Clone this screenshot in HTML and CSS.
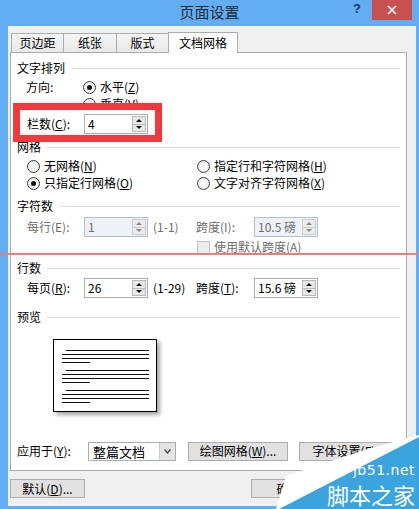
FILE: index.html
```html
<!DOCTYPE html>
<html lang="zh-CN">

<head>
    <meta charset="UTF-8">
    <title>页面设置</title>
    <link rel="stylesheet" href="styles.css">
</head>

<body>
    <div class="window">
        <div class="titlebar">
            <span class="title">页面设置</span>
            <div class="controls">
                <span class="help">?</span>
                <span class="close">
                    <svg width="10" height="10" viewBox="0 0 10 10">
                        <path d="M1 1 L9 9 M9 1 L1 9" stroke="#fff" stroke-width="1.6" fill="none" />
                    </svg>
                </span>
            </div>
        </div>

        <div class="client">
            <!-- tabs -->
            <div class="tabs">
                <div class="tab t1">页边距</div>
                <div class="tab t2">纸张</div>
                <div class="tab t3">版式</div>
                <div class="tab t4 active">文档网格</div>
            </div>

            <div class="panel">
                <div class="group-head g-text"><span>文字排列</span></div>
                <div class="row r-dir">
                    <span class="lbl">方向:</span>
                    <span class="radio on"></span><span class="opt">水平(<u>Z</u>)</span>
                </div>
                <div class="row r-vert">
                    <span class="radio"></span><span class="opt">垂直(<u>V</u>)</span>
                </div>
                <div class="row r-cols">
                    <span class="lbl">栏数(<u>C</u>):</span>
                    <div class="spin"><span class="val">4</span><span class="arrows"><i class="up"></i><i class="down"></i></span></div>
                </div>

                <div class="group-head g-grid"><span>网格</span></div>
                <div class="row r-grid1">
                    <div class="col"><span class="radio"></span><span class="opt">无网格(<u>N</u>)</span></div>
                    <div class="col"><span class="radio"></span><span class="opt">指定行和字符网格(<u>H</u>)</span></div>
                </div>
                <div class="row r-grid2">
                    <div class="col"><span class="radio on"></span><span class="opt">只指定行网格(<u>O</u>)</span></div>
                    <div class="col"><span class="radio"></span><span class="opt">文字对齐字符网格(<u>X</u>)</span></div>
                </div>

                <div class="group-head g-chars"><span>字符数</span></div>
                <div class="row r-chars disabled">
                    <span class="lbl">每行(E):</span>
                    <div class="spin off"><span class="val">1</span><span class="arrows"><i class="up"></i><i class="down"></i></span></div>
                    <span class="range">(1-1)</span>
                    <span class="lbl2">跨度(I):</span>
                    <div class="spin off"><span class="val">10.5 磅</span><span class="arrows"><i class="up"></i><i class="down"></i></span></div>
                </div>
                <div class="row r-check disabled">
                    <span class="check"></span><span class="opt">使用默认跨度(A)</span>
                </div>

                <div class="group-head g-lines"><span>行数</span></div>
                <div class="row r-lines">
                    <span class="lbl">每页(<u>R</u>):</span>
                    <div class="spin"><span class="val">26</span><span class="arrows"><i class="up"></i><i class="down"></i></span></div>
                    <span class="range">(1-29)</span>
                    <span class="lbl2">跨度(<u>T</u>):</span>
                    <div class="spin"><span class="val">15.6 磅</span><span class="arrows"><i class="up"></i><i class="down"></i></span></div>
                </div>

                <div class="group-head g-preview"><span>预览</span></div>
                <div class="preview">
                    <div class="pl indent"></div>
                    <div class="pl"></div>
                    <div class="pl"></div>
                    <div class="pl short"></div>
                    <div class="pl indent"></div>
                    <div class="pl"></div>
                    <div class="pl"></div>
                    <div class="pl short"></div>
                    <div class="pl indent"></div>
                    <div class="pl"></div>
                    <div class="pl"></div>
                    <div class="pl short"></div>
                </div>

                <div class="row r-apply">
                    <span class="lbl-apply">应用于(<u>Y</u>):</span>
                    <div class="select">
                        <span class="val">整篇文档</span>
                        <span class="drop">
                            <svg width="7" height="5" viewBox="0 0 7 5">
                                <path d="M0.5 0.5 L3.5 4 L6.5 0.5" stroke="#444" stroke-width="1.2" fill="none" />
                            </svg>
                        </span>
                    </div>
                    <button class="btn b-draw">绘图网格(<u>W</u>)...</button>
                    <button class="btn b-font">字体设置(<u>F</u>)...</button>
                </div>
            </div>

            <div class="footer">
                <button class="btn b-default">默认(<u>D</u>)...</button>
                <button class="btn b-ok">确定</button>
            </div>
        </div>

        <!-- annotations drawn over the dialog -->
        <div class="mark-box"></div>
        <div class="mark-line"></div>

        <div class="watermark">
            <svg width="150" height="80" viewBox="0 0 150 80">
                <polygon points="7,80 17,47 99,20 150,6 150,80" fill="#fff" />
                <polygon points="10,80 150,8 150,80" fill="#3ba3de" />
            </svg>
            <span class="wm-url">jb51.net</span>
            <span class="wm-name">脚本之家</span>
        </div>
    </div>
</body>

</html>
```

FILE: styles.css
```css
body {
    margin: 0;
    font-family: "Noto Sans CJK SC", sans-serif;
    font-size: 12px;
    color: #000;
}

.window {
    position: relative;
    width: 419px;
    height: 509px;
    background-color: #62adf3;
    overflow: hidden;
}

/* title bar */
.titlebar {
    height: 26px;
    display: grid;
    grid-template-columns: 1fr auto 1fr;
}

.title {
    grid-column: 2;
    font-size: 15px;
    line-height: 24px;
    color: #1d2a38;
}

.controls {
    grid-column: 3;
    justify-self: end;
    display: flex;
    margin-right: 7px;
}

.help {
    width: 30px;
    text-align: center;
    font-family: "Liberation Sans", sans-serif;
    font-weight: bold;
    font-size: 13px;
    line-height: 17px;
    color: #1f3a5c;
}

.close {
    width: 40px;
    height: 20px;
    background-color: #c75050;
    display: flex;
    align-items: center;
    justify-content: center;
}

/* dialog body */
.client {
    margin: 0 3px 0 8px;
    height: 480px;
    box-sizing: border-box;
    padding-top: 6px;
    background-color: #f0f0f0;
}

.tabs {
    display: flex;
    align-items: flex-end;
    padding-left: 3px;
}

.tab {
    height: 19px;
    box-sizing: border-box;
    border: 1px solid #acacac;
    border-bottom: none;
    background: linear-gradient(#f4f4f4, #e9e9e9);
    text-align: center;
    line-height: 18px;
    margin-left: -1px;
}

.tab.t1 {
    width: 53px;
    margin-left: 0;
}

.tab.t2 {
    width: 54px;
}

.tab.t3 {
    width: 53px;
}

.tab.t4 {
    width: 70px;
}

.tab.active {
    height: 21px;
    line-height: 20px;
    background: #fff;
    margin-bottom: -1px;
    position: relative;
    z-index: 1;
}

.panel {
    margin-left: 2px;
    width: 397px;
    box-sizing: border-box;
    border: 1px solid #acacac;
    background-color: #fff;
    padding-bottom: 9px;
}

.group-head {
    display: flex;
    align-items: center;
    height: 16px;
    line-height: 16px;
    padding: 0 6px;
}

.group-head::after {
    content: "";
    flex: 1;
    height: 1px;
    margin-left: 6px;
    background-color: #dcdcdc;
}

.g-text {
    margin-top: 7px;
}

.g-grid {
    margin-top: 5px;
}

.g-chars {
    margin-top: 7px;
}

.g-lines {
    margin-top: 5px;
}

.g-preview {
    margin-top: 11px;
}

.row {
    display: flex;
    align-items: center;
    height: 16px;
    line-height: 16px;
}

.row.disabled {
    color: #6d6d6d;
}

.lbl {
    width: 57px;
}

.lbl2 {
    width: 58px;
}

.range {
    width: 43px;
    margin-left: 5px;
}

.opt {
    margin-left: 4px;
}

.r-dir {
    margin-top: 3px;
    padding-left: 15px;
}

.r-vert {
    margin-top: 1px;
    padding-left: 72px;
}

.r-cols {
    margin-top: 2px;
    height: 20px;
    padding-left: 16px;
    position: relative;
    z-index: 2;
}

.r-grid1 {
    margin-top: 3px;
    padding-left: 16px;
}

.r-grid2 {
    margin-top: 1px;
    padding-left: 16px;
}

.col {
    display: flex;
    align-items: center;
    width: 170px;
}

.r-chars {
    margin-top: 3px;
    height: 20px;
    padding-left: 16px;
}

.r-check {
    margin-top: 2px;
    padding-left: 186px;
}

.r-lines {
    margin-top: 2px;
    height: 20px;
    padding-left: 16px;
}

.r-apply {
    margin-top: 29px;
    height: 20px;
    padding-left: 6px;
}

.lbl-apply {
    width: 71px;
}

/* controls */
.radio {
    width: 13px;
    height: 13px;
    box-sizing: border-box;
    border: 1px solid #3c3c3c;
    border-radius: 50%;
    background: radial-gradient(#fff, #e6e6e6);
    display: flex;
    align-items: center;
    justify-content: center;
}

.radio.on::after {
    content: "";
    width: 5px;
    height: 5px;
    border-radius: 50%;
    background-color: #111;
}

.check {
    width: 13px;
    height: 13px;
    box-sizing: border-box;
    border: 1px solid #c4c4c4;
    background-color: #ececec;
}

.spin {
    display: flex;
    width: 64px;
    height: 20px;
    box-sizing: border-box;
    border: 1px solid #abadb3;
    background-color: #fff;
}

.spin .val {
    flex: 1;
    padding-left: 3px;
    line-height: 18px;
}

.spin .arrows {
    display: flex;
    flex-direction: column;
    width: 14px;
    margin: 1px;
}

.spin .arrows i {
    flex: 1;
    display: flex;
    align-items: center;
    justify-content: center;
    background-color: #e8e8e8;
    border: 1px solid #b9b9b9;
}

.spin .arrows i.down {
    border-top: none;
}

.spin .arrows i::after {
    content: "";
    border-left: 3px solid transparent;
    border-right: 3px solid transparent;
    border-bottom: 3px solid #111;
}

.spin .arrows i.down::after {
    border-bottom: none;
    border-top: 3px solid #111;
}

.spin.off {
    border-color: #b4bfcf;
    background-color: #eef1f6;
}

.spin.off .arrows i {
    background-color: #ececec;
    border-color: #cdcdcd;
}

.spin.off .arrows i::after {
    border-bottom-color: #888;
}

.spin.off .arrows i.down::after {
    border-top-color: #888;
}

.select {
    display: flex;
    width: 88px;
    height: 19px;
    box-sizing: border-box;
    border: 1px solid #abadb3;
    background-color: #fff;
}

.select .val {
    flex: 1;
    padding-left: 4px;
    line-height: 17px;
    font-size: 13px;
}

.select .drop {
    width: 15px;
    display: flex;
    align-items: center;
    justify-content: center;
    background-color: #e5e5e5;
    border-left: 1px solid #c8c8c8;
}

.btn {
    height: 19px;
    padding: 0;
    box-sizing: border-box;
    border: 1px solid #adadad;
    background-color: #e1e1e1;
    font-family: inherit;
    font-size: 12px;
    line-height: 16px;
    color: #000;
}

.b-draw {
    width: 100px;
    margin-left: 12px;
}

.b-font {
    width: 100px;
    margin-left: 11px;
}

/* preview page */
.preview {
    margin: 14px 0 0 42px;
    width: 104px;
    height: 73px;
    box-sizing: border-box;
    border: 1px solid #000;
    padding: 10px 7px 0 8px;
    background-color: #fff;
    box-shadow: 3px 3px 4px rgba(0, 0, 0, 0.35);
}

.pl {
    height: 1px;
    margin-bottom: 3px;
    background-color: #111;
}

.pl.indent {
    margin-left: 4px;
}

.pl.short {
    width: 28px;
    margin-bottom: 7px;
}

/* bottom buttons */
.footer {
    display: flex;
    margin-top: 8px;
    padding: 0 90px 0 2px;
}

.footer .btn {
    width: 75px;
}

.b-ok {
    margin-left: auto;
}

/* red annotation marks */
.mark-box {
    position: absolute;
    left: 13px;
    top: 103px;
    width: 149px;
    height: 39px;
    box-sizing: border-box;
    border: 7px solid #f03a3c;
    background-color: #fff;
    z-index: 1;
}

.mark-line {
    position: absolute;
    left: 0;
    top: 253px;
    width: 419px;
    height: 2px;
    background-color: #ea7c82;
    z-index: 3;
}

/* site watermark */
.watermark {
    position: absolute;
    right: 0;
    bottom: 0;
    width: 150px;
    height: 80px;
    z-index: 4;
}

.watermark svg {
    display: block;
}

.wm-url {
    position: absolute;
    right: 4px;
    top: 34px;
    font-family: "DejaVu Sans", sans-serif;
    font-size: 14px;
    line-height: 14px;
    color: #fff;
    letter-spacing: 0.5px;
}

.wm-name {
    position: absolute;
    right: 4px;
    top: 52px;
    font-size: 22px;
    line-height: 27px;
    color: #fff;
}
```
